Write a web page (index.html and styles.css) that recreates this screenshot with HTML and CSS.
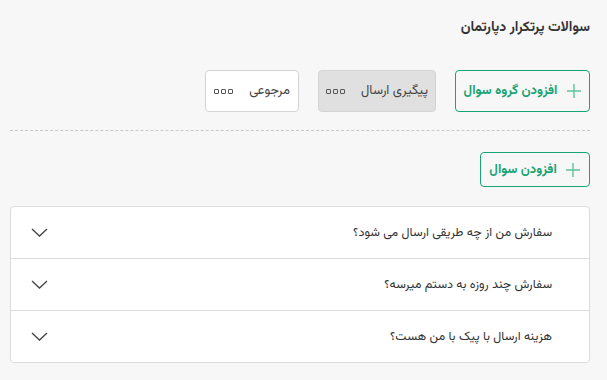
FILE: index.html
```html
<!DOCTYPE html>
<html lang="fa" dir="rtl">
<head>
<meta charset="utf-8">
<link rel="stylesheet" href="styles.css">
</head>
<body>
<div class="page">
  <h1 class="title">سوالات پرتکرار دپارتمان</h1>
  <div class="actions">
    <button class="btn btn-green btn-lg"><svg class="plus" width="16" height="16" viewBox="0 0 16 16"><path d="M8 1v14M1 8h14" stroke="#5cc49a" stroke-width="1.4" fill="none"/></svg><span>افزودن گروه سوال</span></button>
    <button class="btn btn-tab btn-gray"><span>پیگیری ارسال</span><span class="dots"><i></i><i></i><i></i></span></button>
    <button class="btn btn-tab btn-white"><span>مرجوعی</span><span class="dots"><i></i><i></i><i></i></span></button>
  </div>
  <hr class="sep">
  <div class="add-row">
    <button class="btn btn-green btn-sm"><svg class="plus" width="16" height="16" viewBox="0 0 16 16"><path d="M8 1v14M1 8h14" stroke="#5cc49a" stroke-width="1.4" fill="none"/></svg><span>افزودن سوال</span></button>
  </div>
  <div class="accordion">
    <div class="item"><span class="q">سفارش من از چه طریقی ارسال می شود؟</span><svg class="chev" width="17" height="9" viewBox="0 0 17 9"><path d="M1 1l7.5 7 7.5-7" stroke="#444" stroke-width="1.3" fill="none"/></svg></div>
    <div class="item"><span class="q">سفارش چند روزه به دستم میرسه؟</span><svg class="chev" width="17" height="9" viewBox="0 0 17 9"><path d="M1 1l7.5 7 7.5-7" stroke="#444" stroke-width="1.3" fill="none"/></svg></div>
    <div class="item"><span class="q">هزینه ارسال با پیک با من هست؟</span><svg class="chev" width="17" height="9" viewBox="0 0 17 9"><path d="M1 1l7.5 7 7.5-7" stroke="#444" stroke-width="1.3" fill="none"/></svg></div>
  </div>
</div>
</body>
</html>
```
FILE: styles.css
```css
html, body {
  margin: 0;
  padding: 0;
  background: #f7f7f7;
}
body {
  font-family: "Vazirmatn", "Noto Sans Arabic", "DejaVu Sans", sans-serif;
  color: #333;
}
.page {
  padding: 0 17px 0 10px;
}
.title {
  margin: 0;
  padding-top: 18px;
  height: 70px;
  box-sizing: border-box;
  font-size: 14px;
  font-weight: bold;
  color: #333;
  line-height: 20px;
}
.actions {
  display: flex;
  gap: 19px;
  align-items: stretch;
}
.btn {
  font-family: inherit;
  display: flex;
  align-items: center;
  justify-content: center;
  border-radius: 4px;
  box-sizing: border-box;
  padding: 0;
  cursor: pointer;
}
.btn-green {
  background: #f7f7f7;
  border: 1px solid #17a374;
  color: #17a374;
  font-weight: bold;
  font-size: 13px;
  gap: 8px;
}
.btn-lg {
  width: 135px;
  height: 42px;
}
.btn-sm {
  width: 110px;
  height: 35px;
}
.btn-tab {
  height: 42px;
  font-size: 13px;
  color: #444;
  gap: 16px;
  border: 1px solid #d4d4d8;
}
.btn-gray {
  width: 118px;
  background: #e0e0e0;
}
.btn-white {
  width: 94px;
  background: #fff;
}
.dots {
  display: flex;
  gap: 2px;
}
.dots i {
  display: block;
  width: 3px;
  height: 3px;
  border: 1px solid #555;
  border-radius: 1px;
}
.sep {
  margin: 18px 0 0 0;
  border: 0;
  border-top: 1px dashed #c8c8c8;
  height: 0;
}
.add-row {
  display: flex;
  padding-top: 21px;
}
.accordion {
  margin-top: 19px;
  background: #fff;
  border: 1px solid #dcdce0;
  border-radius: 4px;
}
.item {
  height: 51px;
  display: flex;
  align-items: center;
  justify-content: space-between;
  padding: 0 37px 0 20px;
  border-top: 1px solid #dcdce0;
  font-size: 12.5px;
  color: #333;
}
.item:first-child {
  border-top: 0;
}
.chev {
  display: block;
}
```
